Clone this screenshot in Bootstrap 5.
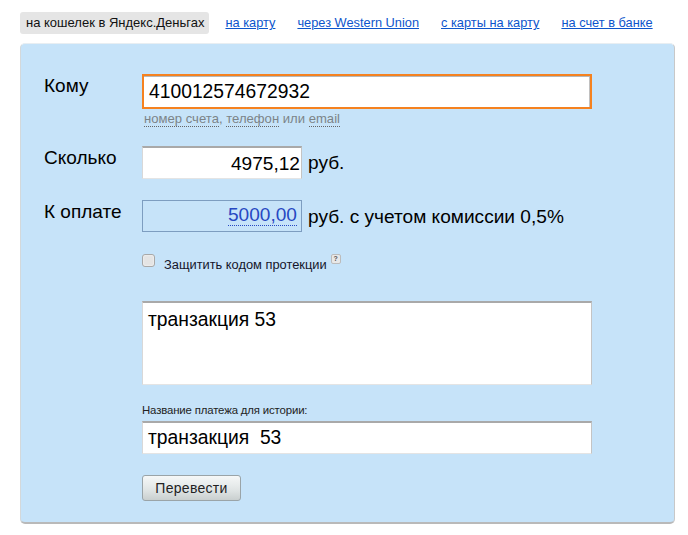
<!DOCTYPE html>
<html lang="ru">
<head>
<meta charset="utf-8">
<title>Перевод</title>
<link href="https://cdn.jsdelivr.net/npm/bootstrap@5.3.0/dist/css/bootstrap.min.css" rel="stylesheet">
<style>
body{background:#fff;font-family:"Liberation Sans",Arial,sans-serif;color:#000;margin:0;overflow:hidden}
.ya-wrap{width:655px;margin-left:20px;padding-top:12px}
.ya-tabs{height:31px;font-size:13px;line-height:22px;gap:22px}
.ya-tab-on{background:#e5e5e5;border-radius:3px;padding:0 5px 0 6px;height:22px;color:#111;margin-right:-6px;white-space:nowrap}
.ya-tab{color:#0d55cc;text-decoration:underline;white-space:nowrap;line-height:21px;font-size:12.8px}
.ya-panel{background:#c6e3f9;border-radius:5px;height:481px;border-right:1px solid #c8c8c8;border-bottom:2px solid #b9b9b9;border-left:1px solid #d4d8da;border-top:1px solid #e8eef2;padding:30px 0 0 23px}
.ya-label{width:98px;flex:none;font-size:19px;line-height:24px}
.ya-input{display:block;background:#fff;border:1px solid #e4e4e4;border-top:2px solid #a9a9a9;border-left-color:#d8d8d8;border-right-color:#c4c4c4;color:#000;font-size:19.3px;padding:0 5px}
.ya-first{width:450px;height:35px;line-height:31px;border:2px solid #f58220;box-shadow:inset 0 1px 0 #b8b8b8,inset -1px 0 0 #c0c0c0}
.ya-hint{font-size:13.1px;line-height:15px;margin:2px 0 0 2px;color:#7c8488;height:17px;white-space:nowrap}
.ya-hint span{border-bottom:1px dotted #666}
.ya-sum{width:160px;height:33px;line-height:32px;text-align:right;padding:0 1px 0 0;font-size:19.1px}
.ya-unit{font-size:19.1px;line-height:33px;margin-left:6px;white-space:nowrap}
.ya-pay{width:160px;height:32px;border:1px solid #7d9dc0;text-align:right;font-size:19.1px;line-height:28px;padding-right:4px;color:#2748c2}
.ya-pay span{border-bottom:1px dotted #2748c2;display:inline-block;line-height:21px}
.ya-check{width:13px;height:13px;border:1px solid #a8a8a8;border-radius:3px;background:#e4e4e4;flex:none;box-shadow:inset 0 0 2px #fff}
.ya-protect{font-size:12.85px;line-height:15px;margin-left:9px;color:#15152a;padding-top:3px;white-space:nowrap}
.ya-q{width:10px;height:10px;background:#e8e8e8;border:1px solid #bcbcbc;border-radius:2px;font-size:7px;line-height:8px;text-align:center;font-weight:bold;color:#555;margin-left:4px;flex:none}
.ya-area{width:450px;height:84px;line-height:24px;padding:5px 5px}
.ya-cap{font-size:11.4px;line-height:14px;color:#222;letter-spacing:-.15px;white-space:nowrap}
.ya-name{width:450px;height:33px;line-height:30px;padding:0 5px;white-space:pre}
.ya-btn{width:99px;height:26px;border:1px solid #9aa4a8;border-radius:3px;background:linear-gradient(#f6f8f8,#dfe4e4 60%,#c9cfcf);color:#222;font-size:14px;line-height:24px;padding:0;letter-spacing:.3px}
.ya-btn:hover{background:linear-gradient(#f6f8f8,#dfe4e4 60%,#c9cfcf);border-color:#9aa4a8;color:#222}
.ya-row-sum{margin-top:18px}
.ya-row-pay{margin-top:21px}
.ya-check-row{margin-top:21px}
.ya-row-area{margin-top:29px}
.ya-row-cap{margin-top:18px}
.ya-row-name{margin-top:4px}
.ya-row-btn{margin-top:21px}
</style>
</head>
<body>
<div class="ya-wrap">
  <div class="ya-tabs d-flex">
    <div class="ya-tab-on">на кошелек в Яндекс.Деньгах</div>
    <a class="ya-tab" href="#">на карту</a>
    <a class="ya-tab" href="#">через Western Union</a>
    <a class="ya-tab" href="#">с карты на карту</a>
    <a class="ya-tab" href="#">на счет в банке</a>
  </div>
  <div class="ya-panel">
    <div class="d-flex">
      <div class="ya-label">Кому</div>
      <div>
        <div class="ya-input ya-first">410012574672932</div>
        <div class="ya-hint"><span>номер счета</span>, <span>телефон</span> или <span>email</span></div>
      </div>
    </div>
    <div class="d-flex ya-row-sum">
      <div class="ya-label">Сколько</div>
      <div class="ya-input ya-sum">4975,12</div>
      <div class="ya-unit">руб.</div>
    </div>
    <div class="d-flex ya-row-pay">
      <div class="ya-label">К оплате</div>
      <div class="ya-pay"><span>5000,00</span></div>
      <div class="ya-unit">руб. с учетом комиссии 0,5%</div>
    </div>
    <div class="d-flex align-items-start ya-check-row">
      <div class="ya-label"></div>
      <div class="ya-check"></div>
      <div class="ya-protect">Защитить кодом протекции</div>
      <div class="ya-q">?</div>
    </div>
    <div class="d-flex ya-row-area">
      <div class="ya-label"></div>
      <div class="ya-input ya-area">транзакция 53</div>
    </div>
    <div class="d-flex ya-row-cap">
      <div class="ya-label"></div>
      <div class="ya-cap">Название платежа для истории:</div>
    </div>
    <div class="d-flex ya-row-name">
      <div class="ya-label"></div>
      <div class="ya-input ya-name">транзакция  53</div>
    </div>
    <div class="d-flex ya-row-btn">
      <div class="ya-label"></div>
      <button type="button" class="btn ya-btn">Перевести</button>
    </div>
  </div>
</div>
<script src="https://cdn.jsdelivr.net/npm/bootstrap@5.3.0/dist/js/bootstrap.bundle.min.js"></script>
</body>
</html>
